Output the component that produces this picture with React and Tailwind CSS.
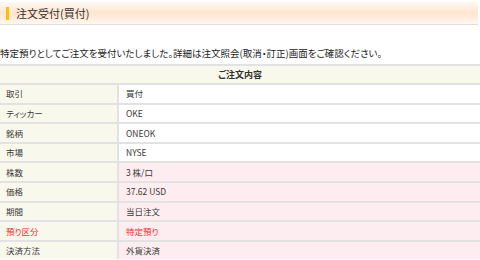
const rows = [
  { label: "取引", value: "買付" },
  { label: "ティッカー", value: "OKE" },
  { label: "銘柄", value: "ONEOK" },
  { label: "市場", value: "NYSE" },
  { label: "株数", value: "3 株/口", pink: true },
  { label: "価格", value: "37.62 USD", pink: true },
  { label: "期間", value: "当日注文", pink: true },
  { label: "預り区分", value: "特定預り", pink: true, red: true },
  { label: "決済方法", value: "外貨決済", pink: true },
];

export default function App() {
  return (
    <div
      className="w-[480px] h-[260px] overflow-hidden bg-white text-[#333]"
      style={{ fontFamily: '"Noto Sans CJK JP", "Liberation Sans", sans-serif', fontFeatureSettings: '"palt"' }}
    >
      <div className="mt-[2px] mr-[2px] h-[23px] flex items-center border-b border-[#dedede] bg-gradient-to-b from-[#fff8f1] via-[#ffe5cf] to-[#fff7ef]">
        <div className="ml-[6px] w-[3px] h-[13px] bg-[#f7c200]" />
        <div className="ml-[7px] text-[11px] text-[#333] leading-none">注文受付(買付)</div>
      </div>
      <div className="mt-[21px] text-[9.5px] leading-[14px] text-[#222] whitespace-nowrap">
        特定預りとしてご注文を受付いたしました。詳細は注文照会(取消・訂正)画面をご確認ください。
      </div>
      <div className="mt-[4px] border-t-2 border-[#e2e2e2]">
        <div className="h-[17px] flex items-center justify-center bg-[#f8f8ec] text-[9px] font-bold text-[#333]">
          ご注文内容
        </div>
        {rows.map((r) => (
          <div key={r.label} className="h-[19.6px] flex border-t-2 border-[#e2e2e2] text-[8.5px]">
            <div className={`w-[119px] flex items-center pl-[6px] bg-[#f8f8ec] border-r-2 border-[#e2e2e2] ${r.red ? "text-[#ff2a2a]" : "text-[#3a3a3a]"}`}>
              {r.label}
            </div>
            <div className={`flex-1 flex items-center pl-[7px] ${r.pink ? "bg-[#fdedf0]" : "bg-white"} ${r.red ? "text-[#ff2a2a]" : "text-[#3a3a3a]"}`}>
              {r.value}
            </div>
          </div>
        ))}
      </div>
    </div>
  );
}
